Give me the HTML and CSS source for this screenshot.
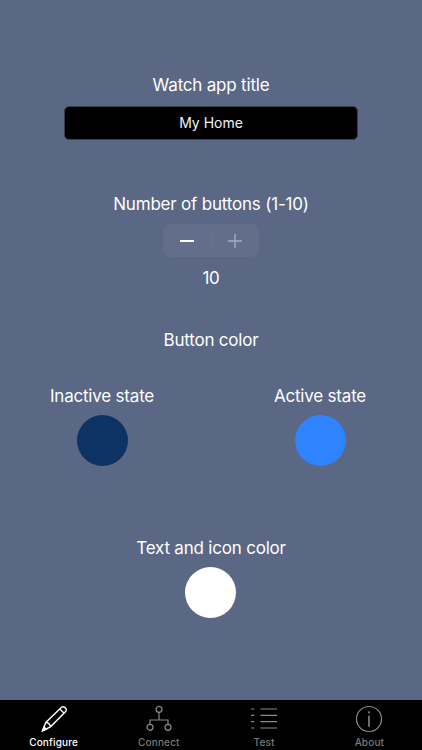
FILE: index.html
```html
<!DOCTYPE html>
<html lang="en">
<head>
<meta charset="utf-8">
<title>Watch app</title>
<link rel="stylesheet" href="styles.css">
</head>
<body>
<div class="app">
  <main class="content">
    <section class="group title-group">
      <div class="label">Watch app title</div>
      <div class="field">My Home</div>
    </section>
    <section class="group count-group">
      <div class="label">Number of buttons (1-10)</div>
      <div class="stepper">
        <div class="step">
          <svg width="16" height="16" viewBox="0 0 16 16"><path d="M1 8h14" stroke="#fff" stroke-width="2"/></svg>
        </div>
        <div class="divider"></div>
        <div class="step">
          <svg width="16" height="16" viewBox="0 0 16 16"><path d="M1 8h14M8 1v14" stroke="#a5adc0" stroke-width="1.4"/></svg>
        </div>
      </div>
      <div class="label count">10</div>
    </section>
    <div class="label color-head">Button color</div>
    <section class="states">
      <div class="state">
        <div class="label">Inactive state</div>
        <div class="swatch navy"></div>
      </div>
      <div class="state">
        <div class="label">Active state</div>
        <div class="swatch blue"></div>
      </div>
    </section>
    <section class="group text-color">
      <div class="label">Text and icon color</div>
      <div class="swatch white"></div>
    </section>
  </main>
  <nav class="tabbar">
    <div class="tab active">
      <svg class="icon" width="30" height="30" viewBox="0 0 30 30" fill="none" stroke="#fff" stroke-width="1.4">
        <path d="M3.6 26.7 L6.8 18.5 L22.5 3.3 Q24 2.2 25.5 3.1 L27 4.7 Q27.8 6.2 26.7 7.6 L11.5 22.8 Z"/>
        <path d="M6.8 18.5 Q10.5 18.6 11.5 22.8"/>
        <path d="M20.8 5 L25.2 9.2"/>
        <path d="M3.6 26.7 L7.2 25.2 L5.1 23 Z" fill="#fff"/>
      </svg>
      <span>Configure</span>
    </div>
    <div class="tab">
      <svg class="icon" width="30" height="30" viewBox="0 0 30 30" fill="none" stroke="#8a8a8a" stroke-width="1.2">
        <circle cx="15" cy="5.3" r="3"/>
        <circle cx="6" cy="23.3" r="3"/>
        <circle cx="24" cy="23.3" r="3"/>
        <path d="M15 8.3V16M6 20.3V16H24V20.3"/>
      </svg>
      <span>Connect</span>
    </div>
    <div class="tab">
      <svg class="icon" width="30" height="30" viewBox="0 0 30 30" fill="none" stroke="#8a8a8a" stroke-width="1.2">
        <path d="M2 5h3.3M11.5 5H28M2 11.3h3.3M11.5 11.3H28M2 17.7h3.3M11.5 17.7H28M2 24h3.3M11.5 24H28"/>
      </svg>
      <span>Test</span>
    </div>
    <div class="tab">
      <svg class="icon" width="30" height="30" viewBox="0 0 30 30" fill="none" stroke="#8a8a8a" stroke-width="1.2">
        <circle cx="15" cy="15" r="12.5"/>
        <path d="M15 11.7v11" stroke-width="1.6"/>
        <circle cx="15" cy="8.3" r="1" fill="#8a8a8a" stroke="none"/>
      </svg>
      <span>About</span>
    </div>
  </nav>
</div>
</body>
</html>
```
FILE: styles.css
```css
html, body {
  margin: 0;
  padding: 0;
}
body {
  font-family: Inter, "Liberation Sans", sans-serif;
  color: #fff;
}
.app {
  width: 422px;
  height: 750px;
  background: #5a6785;
  display: flex;
  flex-direction: column;
  overflow: hidden;
}
.content {
  flex: 1;
  display: flex;
  flex-direction: column;
  align-items: center;
  padding-top: 74px;
}
.label {
  font-size: 17px;
  line-height: 22px;
  letter-spacing: -0.2px;
  text-align: center;
  white-space: nowrap;
}
.group {
  display: flex;
  flex-direction: column;
  align-items: center;
}
.field {
  box-sizing: border-box;
  width: 294px;
  height: 34px;
  margin-top: 10px;
  background: #000;
  border: 1px solid #39404f;
  border-radius: 5px;
  font-size: 14px;
  line-height: 32px;
  text-align: center;
  color: #f2f2f2;
}
.count-group {
  margin-top: 53px;
}
.stepper {
  display: flex;
  align-items: center;
  width: 96px;
  height: 33px;
  margin-top: 9px;
  border-radius: 8px;
  background: #636e8b;
}
.step {
  flex: 1;
  display: flex;
  align-items: center;
  justify-content: center;
  height: 100%;
}
.divider {
  width: 1px;
  height: 19px;
  background: #6a748f;
}
.count {
  margin-top: 10px;
}
.color-head {
  margin-top: 40px;
}
.states {
  align-self: stretch;
  display: flex;
  justify-content: space-between;
  padding: 0 47px 0 39px;
  margin-top: 34px;
}
.state {
  width: 126px;
  display: flex;
  flex-direction: column;
  align-items: center;
}
.state + .state {
  width: 110px;
}
.swatch {
  width: 51px;
  height: 51px;
  border-radius: 50%;
  margin-top: 8px;
}
.navy {
  background: #0d3264;
}
.blue {
  background: #2f83ff;
}
.white {
  background: #fff;
}
.text-color {
  margin-top: 71px;
}
.tabbar {
  height: 50px;
  background: #000;
  display: flex;
  padding: 0 0 0 1px;
}
.tab {
  flex: 1;
  display: flex;
  flex-direction: column;
  align-items: center;
  font-size: 10px;
  line-height: 12px;
  font-weight: 500;
  color: #7a7a7a;
  letter-spacing: 0.15px;
}
.tab.active {
  color: #fff;
}
.icon {
  margin-top: 4px;
  height: 30px;
}
.tab span {
  margin-top: 2px;
}
```
